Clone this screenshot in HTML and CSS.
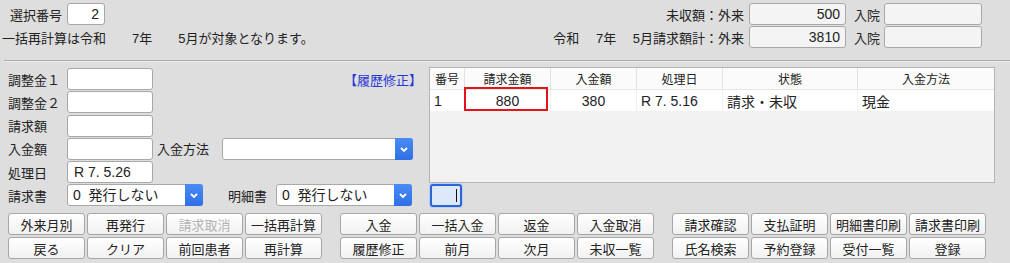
FILE: index.html
```html
<!DOCTYPE html>
<html lang="ja">
<head>
    <meta charset="UTF-8">
    <title>請求入金</title>
    <link rel="stylesheet" href="styles.css">
</head>
<body>
    <div class="screen">
        <!-- Header -->
        <div class="head">
            <div class="head-left">
                <div class="line">
                    <span class="lbl pick">選択番号</span>
                    <div class="box num pick-box">2</div>
                </div>
                <div class="line note">一括再計算は令和　　7年　　5月が対象となります。</div>
            </div>
            <div class="head-right">
                <span class="lbl right">未収額：外来</span>
                <div class="box num ro">500</div>
                <span class="lbl inpt">入院</span>
                <div class="box ro wide"></div>

                <span class="lbl right">令和　 7年　 5月請求額計：外来</span>
                <div class="box num ro">3810</div>
                <span class="lbl inpt">入院</span>
                <div class="box ro wide"></div>
            </div>
        </div>

        <div class="sep"></div>

        <!-- Form + list -->
        <div class="main">
            <div class="form">
                <div class="row">
                    <span class="lbl col">調整金１</span>
                    <div class="box field"></div>
                    <span class="link">【履歴修正】</span>
                </div>
                <div class="row">
                    <span class="lbl col">調整金２</span>
                    <div class="box field"></div>
                </div>
                <div class="row">
                    <span class="lbl col">請求額</span>
                    <div class="box field"></div>
                </div>
                <div class="row">
                    <span class="lbl col">入金額</span>
                    <div class="box field"></div>
                    <span class="lbl method">入金方法</span>
                    <div class="select method-sel">
                        <span class="value"></span>
                        <span class="arrow"><svg width="18" height="22" viewBox="0 0 18 22"><polyline points="6,10 9,13 12,10" fill="none" stroke="#fff" stroke-width="1.8"/></svg></span>
                    </div>
                </div>
                <div class="row">
                    <span class="lbl col">処理日</span>
                    <div class="box field text">R 7. 5.26</div>
                </div>
                <div class="row">
                    <span class="lbl col">請求書</span>
                    <div class="select issue-sel">
                        <span class="value">0&nbsp; 発行しない</span>
                        <span class="arrow"><svg width="18" height="22" viewBox="0 0 18 22"><polyline points="6,10 9,13 12,10" fill="none" stroke="#fff" stroke-width="1.8"/></svg></span>
                    </div>
                    <span class="lbl detail">明細書</span>
                    <div class="select issue-sel">
                        <span class="value">0&nbsp; 発行しない</span>
                        <span class="arrow"><svg width="18" height="22" viewBox="0 0 18 22"><polyline points="6,10 9,13 12,10" fill="none" stroke="#fff" stroke-width="1.8"/></svg></span>
                    </div>
                </div>
            </div>

            <div class="list">
                <div class="grid">
                    <table>
                        <thead>
                            <tr>
                                <th class="c-no">番号</th>
                                <th class="c-amt">請求金額</th>
                                <th class="c-amt">入金額</th>
                                <th class="c-amt">処理日</th>
                                <th class="c-state">状態</th>
                                <th>入金方法</th>
                            </tr>
                        </thead>
                        <tbody>
                            <tr>
                                <td>1</td>
                                <td class="mid marked">880</td>
                                <td class="mid">380</td>
                                <td>R 7. 5.16</td>
                                <td>請求・未収</td>
                                <td>現金</td>
                            </tr>
                        </tbody>
                    </table>
                </div>
                <div class="focus-box"><span class="caret"></span></div>
            </div>
        </div>

        <!-- Buttons -->
        <div class="actions">
            <div class="group">
                <button>外来月別</button>
                <button>再発行</button>
                <button class="off">請求取消</button>
                <button>一括再計算</button>
                <button>戻る</button>
                <button>クリア</button>
                <button>前回患者</button>
                <button>再計算</button>
            </div>
            <div class="group">
                <button>入金</button>
                <button>一括入金</button>
                <button>返金</button>
                <button>入金取消</button>
                <button>履歴修正</button>
                <button>前月</button>
                <button>次月</button>
                <button>未収一覧</button>
            </div>
            <div class="group">
                <button>請求確認</button>
                <button>支払証明</button>
                <button>明細書印刷</button>
                <button>請求書印刷</button>
                <button>氏名検索</button>
                <button>予約登録</button>
                <button>受付一覧</button>
                <button>登録</button>
            </div>
        </div>
    </div>
</body>
</html>
```

FILE: styles.css
```css
/* General */
body {
    margin: 0;
    background-color: #dedede;
    font-family: "Liberation Sans", "Noto Sans CJK JP", sans-serif;
    font-size: 13px;
    color: #222;
}

.screen {
    width: 1010px;
    height: 263px;
    padding-top: 3px;
    box-sizing: border-box;
}

.lbl {
    white-space: nowrap;
}

/* Text boxes */
.box {
    height: 22px;
    box-sizing: border-box;
    border: 1px solid #a8a8a8;
    border-radius: 3px;
    background-color: #fff;
    line-height: 20px;
    padding: 0 5px;
    font-size: 14px;
}

.box.num {
    text-align: right;
}

.box.ro {
    background-color: #f4f4f4;
}

/* Header */
.head {
    display: flex;
    justify-content: space-between;
    height: 45px;
}

.head-left {
    display: flex;
    flex-direction: column;
    gap: 1px;
}

.line {
    display: flex;
    align-items: center;
    height: 22px;
}

.pick {
    width: 57px;
    padding-left: 10px;
}

.pick-box {
    width: 38px;
}

.note {
    padding-left: 2px;
}

.head-right {
    display: grid;
    grid-template-columns: auto 97px auto 98px;
    grid-auto-rows: 22px;
    row-gap: 1px;
    align-items: center;
    padding-right: 28px;
}

.head-right .right {
    text-align: right;
    padding-right: 5px;
}

.head-right .inpt {
    padding: 0 4px 0 8px;
}

.sep {
    margin: 12px 0 0 4px;
    height: 1px;
    background-color: #ababab;
    border-bottom: 1px solid #ececec;
}

/* Main area */
.main {
    display: flex;
    gap: 7px;
    margin-top: 5px;
}

.form {
    width: 414px;
    padding-left: 8px;
    padding-top: 1px;
    display: flex;
    flex-direction: column;
    gap: 1.3px;
}

.row {
    display: flex;
    align-items: center;
    height: 22px;
}

.col {
    width: 59px;
}

.field {
    width: 86px;
}

.field.text {
    padding-left: 6px;
}

.link {
    margin-left: auto;
    color: #2637d8;
}

.method {
    width: 65px;
    padding-left: 4px;
}

/* Select */
.select {
    display: flex;
    height: 22px;
    box-sizing: border-box;
    border: 1px solid #a8a8a8;
    border-radius: 3px;
    background-color: #fff;
}

.select .value {
    flex: 1;
    line-height: 20px;
    padding-left: 5px;
    font-size: 14px;
}

.select .arrow {
    width: 18px;
    margin: -1px -1px -1px 0;
    border-radius: 0 3px 3px 0;
    background: linear-gradient(to bottom, #4a8cf5, #2f6fe6);
    display: flex;
    align-items: center;
}

.method-sel {
    width: 191px;
}

.issue-sel {
    width: 136px;
}

.detail {
    padding-left: 25px;
    width: 48px;
}

/* List */
.list {
    width: 566px;
}

.grid {
    height: 116px;
    box-sizing: border-box;
    border: 1px solid #b4b4b4;
    background-color: #f2f2f2;
}

table {
    width: 100%;
    border-collapse: collapse;
}

th {
    height: 21px;
    font-weight: normal;
    font-size: 12px;
    background-color: #fbfbfb;
    border-right: 1px solid #e2e2e2;
    border-bottom: 1px solid #e6e6e6;
    padding: 0;
}

th:last-child,
td:last-child {
    border-right: none;
}

td {
    height: 21px;
    background-color: #fff;
    border-right: 1px solid #f0f0f0;
    padding: 0 4px;
    font-size: 14px;
}

.c-no {
    width: 34px;
}

.c-amt {
    width: 85px;
}

.c-state {
    width: 134px;
}

.mid {
    text-align: center;
}

.marked {
    position: relative;
}

.marked::after {
    content: '';
    position: absolute;
    left: -1px;
    top: -3px;
    width: 80px;
    height: 20px;
    border: 2px solid #e2141a;
}

.focus-box {
    position: relative;
    width: 32px;
    height: 23px;
    margin-top: 1px;
    margin-left: 1px;
    box-sizing: border-box;
    border: 2px solid #2f63d8;
    border-radius: 3px;
    background-color: #dce9fb;
    box-shadow: 0 0 0 1px #b9cff5;
}

.caret {
    position: absolute;
    right: 3px;
    top: 3px;
    width: 1px;
    height: 13px;
    background-color: #111;
}

/* Buttons */
.actions {
    display: flex;
    margin-top: 6px;
    padding-left: 8px;
}

.group {
    display: grid;
    grid-template-columns: repeat(4, 77px);
    grid-auto-rows: 22px;
    gap: 2px;
    margin-right: 18px;
}

button {
    font-family: "Liberation Sans", "Noto Sans CJK JP", sans-serif;
    font-size: 13px;
    color: #222;
    padding: 0;
    border: 1px solid #a6a6a6;
    border-radius: 3px;
    background: linear-gradient(to bottom, #ffffff, #f1f1f1);
}

button.off {
    color: #b4b4b4;
}
```
